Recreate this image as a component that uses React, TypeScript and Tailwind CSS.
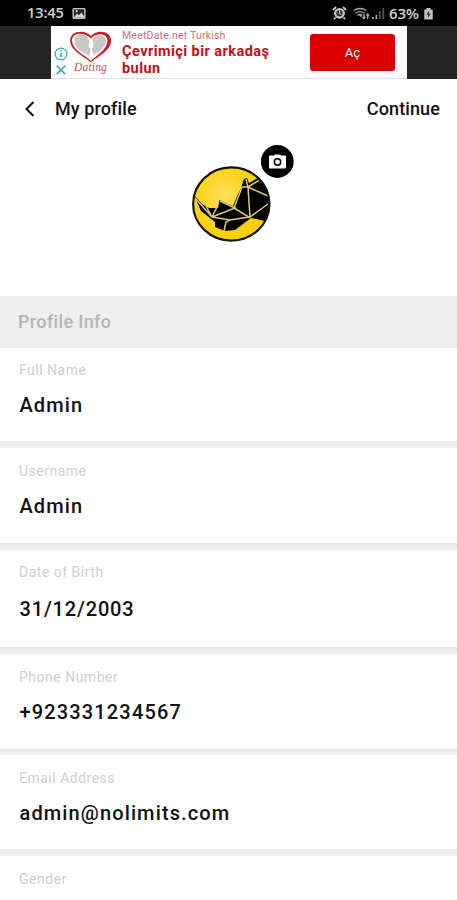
import React from "react";

type Field = {
  label: string;
  value?: string;
  height: string;
  labelTop: string;
  valueTop: string;
  spacing: string;
  divider: string;
};

const fields: Field[] = [
  { label: "Full Name", value: "Admin", height: "h-[93px]", labelTop: "pt-[12px]", valueTop: "mt-[13px]", spacing: "tracking-[1.1px]", divider: "h-[7px]" },
  { label: "Username", value: "Admin", height: "h-[95px]", labelTop: "pt-[13px]", valueTop: "mt-[13px]", spacing: "tracking-[1.1px]", divider: "h-[7px]" },
  { label: "Date of Birth", value: "31/12/2003", height: "h-[97px]", labelTop: "pt-[12px]", valueTop: "mt-[15px]", spacing: "tracking-[0.85px]", divider: "h-[7px]" },
  { label: "Phone Number", value: "+923331234567", height: "h-[95px]", labelTop: "pt-[13px]", valueTop: "mt-[13px]", spacing: "tracking-[1.15px]", divider: "h-[6px]" },
  { label: "Email Address", value: "admin@nolimits.com", height: "h-[94px]", labelTop: "pt-[13px]", valueTop: "mt-[13px]", spacing: "tracking-[1.13px]", divider: "h-[7px]" },
  { label: "Gender", height: "h-[44px]", labelTop: "pt-[13px]", valueTop: "mt-[13px]", spacing: "tracking-[1px]", divider: "h-[7px]" },
];

function StatusBar() {
  return (
    <div className="flex h-[26px] shrink-0 items-center bg-black pl-[27px] pr-[23px] text-[#d2d2d2]">
      <span className="w-[38px] whitespace-nowrap font-['Open_Sans',sans-serif] text-[14.5px] font-semibold leading-[20px] tracking-[-0.1px]">13:45</span>
      <svg className="ml-[7px] h-[13px] w-[14px]" viewBox="0 0 15 13">
        <rect x="0.5" y="0.5" width="14" height="12" rx="1.5" fill="#c4c4c4" />
        <rect x="2" y="2" width="11" height="9" fill="#242424" />
        <path d="M2 10.5 5.5 6.5 7.5 8.5 10 5.5 13 9.5V11H2Z" fill="#d4d4d4" />
        <circle cx="5" cy="4" r="1.2" fill="#d4d4d4" />
      </svg>
      <div className="ml-auto flex items-center">
        <svg className="h-[14px] w-[15px]" viewBox="0 0 15 14" fill="none">
          <path d="M1 4 4 1M11 1l3 3M3.5 11.5 2 13M11.5 11.5 13 13" stroke="#c4c4c4" strokeWidth="1.8" />
          <circle cx="7.5" cy="7.3" r="5.4" fill="#c9c9c9" />
          <circle cx="7.5" cy="7.3" r="3.2" fill="#333" />
          <path d="M7.5 4.5v3l2 1" stroke="#ddd" />
        </svg>
        <svg className="ml-[6px] h-[13px] w-[17px]" viewBox="0 0 17 13" fill="none" stroke="#aaa" strokeWidth="1.3">
          <path d="M.7 3.5Q7 -.5 13.3 3.5M2.5 6Q7 3.2 11.5 6M4.5 8.3Q7 6.7 9.4 8.3M7 8l1.3 2" />
          <path d="M11 6.5v5M9.6 10l1.4 1.7 1.3-1.7M14.7 12V7M13.4 8.6 14.7 7 16 8.6" />
        </svg>
        <svg className="ml-[2px] h-[13px] w-[13px]" viewBox="0 0 13 13">
          <path d="M0 10h1.7v2H0zM3.6 8h1.6v4H3.6z" fill="#aaa" />
          <path d="M7 4h1.6v8H7zM10.5 1h1.7v11h-1.7z" fill="#555" />
        </svg>
        <span className="ml-[4px] w-[32px] whitespace-nowrap font-['Open_Sans',sans-serif] text-[15px] font-semibold leading-[20px] tracking-[-0.1px]">63%</span>
        <svg className="ml-[2px] h-[13px] w-[11px]" viewBox="0 0 10 13">
          <path d="M3 1h4v1.5h2.2v10H.8v-10H3z" fill="#c5c5c5" />
          <path d="M5.7 3.5 2.8 7.5h2L4.2 11l3.1-4.3H5.2z" fill="#222" />
        </svg>
      </div>
    </div>
  );
}

function AdBanner() {
  return (
    <div className="flex h-[53px] shrink-0 justify-center bg-[#242424]">
      <div className="ml-[1px] flex h-[53px] w-[356px] border-b border-[#dedede] bg-white">
        <div className="flex w-[18px] flex-col items-center pl-[1px] pt-[21px]">
          <svg className="h-[14px] w-[14px]" viewBox="0 0 14 14" fill="none" stroke="#2fa9b5" strokeWidth="1.2">
            <circle cx="7" cy="7" r="5.9" />
            <path d="M7 6v4.5M7 3.2v1.4" strokeWidth="1.6" />
          </svg>
          <svg className="mt-[4px] h-[10px] w-[10px]" viewBox="0 0 10 10" fill="none" stroke="#2fa9b5" strokeWidth="1.6">
            <path d="M.7.7 9.3 9.3M9.3.7.7 9.3" />
          </svg>
        </div>
        <div className="flex w-[43px] flex-col items-center pt-[5px]">
          <svg className="h-[32px] w-[43px]" viewBox="0 0 43 32">
            <path d="M22 31.5C17 26 1.2 20.5 1.2 9.5 1.2-.5 15.5-2 22 5 28-2 42-.5 42 9.5 42 20.5 27 26 22 31.5Z" fill="#cf1720" />
            <path d="M22 30C16 24 3.5 19 3 10 2.7 1.5 15 .3 22 7.5 28 .8 39 2.5 38.5 10 38 18.5 28 24 22 30Z" fill="white" />
            <path d="M5.5 10C5 3 14 1 18.5 6.5L20.5 10 19.5 15 21.5 18 20.5 25 13 21Q6 17 5.5 10ZM23.5 9C26 2 34 3 37 9 38 15 31 20 24.5 24L23 18.5 24.5 14Z" fill="#c8c8c8" />
          </svg>
          <span className="mt-[-2px] whitespace-nowrap font-['Liberation_Serif',serif] text-[11.5px] italic leading-[13px] tracking-[0.2px] text-[#b55963]">Dating</span>
        </div>
        <div className="flex w-[180px] flex-col pl-[10px] pt-[3px] font-['Roboto',sans-serif]">
          <span className="whitespace-nowrap text-[10.5px] leading-[13px] tracking-[0.2px] text-[#c66f78]">MeetDate.net Turkish</span>
          <span className="mt-[1px] whitespace-nowrap text-[14.5px] font-bold leading-[17px] tracking-[0.45px] text-[#bf1018]">
            Çevrimiçi bir arkadaş<br />bulun
          </span>
        </div>
        <button className="ml-[18px] mt-[8px] h-[37px] w-[85px] rounded-[3px] bg-[#d90000] font-['Roboto',sans-serif] text-[13px] leading-[16px] text-white">Aç</button>
      </div>
    </div>
  );
}

function Avatar() {
  return (
    <div className="relative ml-[192px] mt-[27px] h-[76px] w-[79px]">
      <svg className="h-[76px] w-[79px]" viewBox="0 0 79 76">
        <defs>
          <radialGradient id="gold" cx="0.42" cy="0.4" r="0.6">
            <stop offset="0" stopColor="#fde05a" />
            <stop offset="0.6" stopColor="#fad420" />
            <stop offset="1" stopColor="#f8cf05" />
          </radialGradient>
          <clipPath id="disc"><ellipse cx="39.3" cy="38" rx="38" ry="36.5" /></clipPath>
        </defs>
        <ellipse cx="39.3" cy="38" rx="38.2" ry="36.8" fill="url(#gold)" />
        <g clipPath="url(#disc)">
          <path d="M2 29 10 38 17 42 26 42 27.5 34 41 40 46 28 49 22 52 13 55 12 57 17 66 12 80 14V57L69 54 59 52 43 64 33 65 23 61 23 56 18 52 9 45Z" fill="black" />
          <path d="M3 32 20 51 14 40M20 51 25 41M20 51 43 42 28 35M20 51 38 54 57 51 42 42M38 54 34 56 32 65M42 42 50 21 56 21 69 13M56 21 76 30M54 13 56 21 58 51 76 38" fill="none" stroke="#dccb70" strokeWidth="1.5" />
        </g>
        <ellipse cx="39.3" cy="38" rx="38.2" ry="36.6" fill="none" stroke="#141409" strokeWidth="2.1" />
      </svg>
      <button className="absolute left-[69px] top-[-21px] h-[33px] w-[33px]">
        <svg className="h-[33px] w-[33px]" viewBox="0 0 33 33">
          <circle cx="16.3" cy="16.5" r="16.4" />
          <path d="M9 10.5h4l1-1h5l1 1h4q1 0 1 1v11q0 1-1 1H9q-1 0-1-1v-11q0-1 1-1Z" fill="white" />
          <circle cx="16.5" cy="17" r="3.2" fill="white" stroke="black" strokeWidth="1.5" />
        </svg>
      </button>
    </div>
  );
}

export default function App() {
  return (
    <main className="flex h-[900px] w-[457px] flex-col overflow-hidden bg-white font-['Roboto',sans-serif]">
      <StatusBar />
      <AdBanner />
      <header className="flex h-[60px] shrink-0 items-center pl-[24px] pr-[17px] text-[18px] font-medium text-[#111]">
        <svg className="h-[16px] w-[11px]" viewBox="0 0 11 16" fill="none" stroke="#111" strokeWidth="2">
          <path d="M9.5 1 2.5 8l7 7" />
        </svg>
        <h1 className="ml-[20px] whitespace-nowrap pb-[2px] tracking-[0.1px]">My profile</h1>
        <button className="ml-auto whitespace-nowrap pb-[2px] tracking-[0.12px]">Continue</button>
      </header>
      <section className="h-[157px] shrink-0">
        <Avatar />
      </section>
      <h2 className="flex h-[52px] shrink-0 items-center bg-[#efefef] pb-[2px] pl-[18px] text-[18px] font-medium tracking-[0.35px] text-[#b5b5b5]">Profile Info</h2>
      {fields.map((field) => (
        <React.Fragment key={field.label}>
          <section className={`flex shrink-0 flex-col pl-[19px] ${field.height} ${field.labelTop}`}>
            <span className="whitespace-nowrap text-[14px] leading-[20px] tracking-[0.5px] text-[#cfcfcf]">{field.label}</span>
            {field.value && <span className={`whitespace-nowrap pl-[0.5px] text-[20px] font-medium leading-[24px] text-[#111] ${field.valueTop} ${field.spacing}`}>{field.value}</span>}
          </section>
          {field.value && <div className={`shrink-0 bg-linear-to-b from-[#e8e8e8] to-[#f3f3f3] ${field.divider}`} />}
        </React.Fragment>
      ))}
    </main>
  );
}
